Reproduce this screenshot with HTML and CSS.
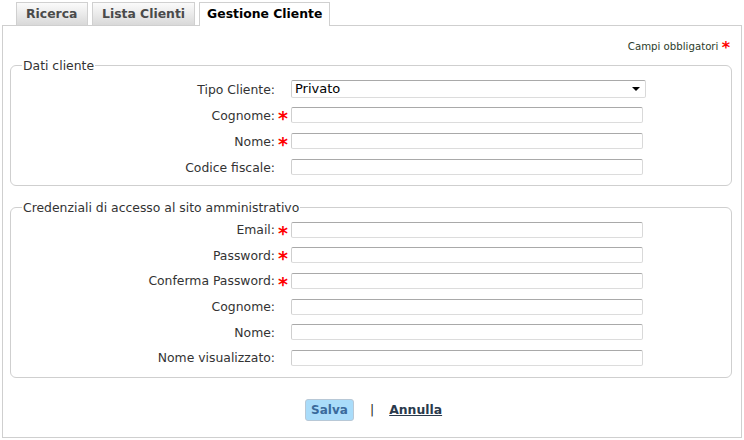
FILE: index.html
```html
<!DOCTYPE html>
<html lang="it">
<head>
<meta charset="utf-8">
<title>Gestione Cliente</title>
<link rel="stylesheet" href="styles.css">
</head>
<body>
<div class="tabs">
  <div class="tab tab-first">Ricerca</div>
  <div class="tab">Lista Clienti</div>
  <div class="tab active">Gestione Cliente</div>
</div>
<div class="panel">
  <div class="note">Campi obbligatori <span class="req">*</span></div>
  <fieldset class="group">
    <legend>Dati cliente</legend>
    <div class="row">
      <label class="lbl">Tipo Cliente:</label><span class="mark"></span>
      <div class="selectwrap">
        <select class="select"><option>Privato</option></select>
        <span class="arrow"></span>
      </div>
    </div>
    <div class="row"><label class="lbl">Cognome:</label><span class="mark req">*</span><input class="field" type="text"></div>
    <div class="row"><label class="lbl">Nome:</label><span class="mark req">*</span><input class="field" type="text"></div>
    <div class="row"><label class="lbl">Codice fiscale:</label><span class="mark"></span><input class="field" type="text"></div>
  </fieldset>
  <fieldset class="group group2">
    <legend>Credenziali di accesso al sito amministrativo</legend>
    <div class="row"><label class="lbl">Email:</label><span class="mark req">*</span><input class="field" type="text"></div>
    <div class="row"><label class="lbl">Password:</label><span class="mark req">*</span><input class="field" type="password"></div>
    <div class="row"><label class="lbl">Conferma Password:</label><span class="mark req">*</span><input class="field" type="password"></div>
    <div class="row"><label class="lbl">Cognome:</label><span class="mark"></span><input class="field" type="text"></div>
    <div class="row"><label class="lbl">Nome:</label><span class="mark"></span><input class="field" type="text"></div>
    <div class="row"><label class="lbl">Nome visualizzato:</label><span class="mark"></span><input class="field" type="text"></div>
  </fieldset>
  <div class="actions">
    <button class="btn" type="button">Salva</button>
    <span class="sep">|</span>
    <a class="cancel" href="#">Annulla</a>
  </div>
</div>
</body>
</html>
```

FILE: styles.css
```css
html, body {
  margin: 0;
  padding: 0;
  background: #fff;
}
body {
  font-family: "DejaVu Sans", Verdana, sans-serif;
  font-size: 12.4px;
  color: #333;
  width: 744px;
  height: 440px;
  overflow: hidden;
}
.tabs {
  display: flex;
  gap: 4px;
  padding: 2px 0 0 16px;
  height: 23px;
  align-items: flex-end;
}
.tab {
  box-sizing: border-box;
  height: 23px;
  padding: 0 9px;
  line-height: 22px;
  border: 1px solid #d0d0d0;
  border-bottom: none;
  background: linear-gradient(#fbfbfb, #d9d9d9);
  font-weight: bold;
  font-size: 12.4px;
  color: #4a4a4a;
}
.tab-first {
  min-width: 72px;
}
.tab.active {
  background: #fff;
  color: #000;
  height: 24px;
  padding: 0 7px;
  margin-bottom: -1px;
  position: relative;
  z-index: 1;
}
.panel {
  box-sizing: border-box;
  margin: 0 2px;
  height: 413px;
  border: 1px solid #cfcfcf;
  padding-top: 14px;
}
.note {
  height: 14px;
  text-align: right;
  font-size: 10.2px;
  line-height: 14px;
  color: #2b3d2b;
  padding-right: 11px;
}
.note .req {
  font-size: 16px;
  line-height: 0;
  vertical-align: -3px;
}
.req {
  color: #f00;
  font-weight: bold;
}
.group {
  margin: 4px 9px 0 7px;
  padding: 3px 10px 5px 10px;
  border: 1px solid #cfcfcf;
  border-radius: 6px;
}
.group legend {
  padding: 0 1px;
  margin-left: 1px;
  font-size: 12.4px;
  line-height: 15px;
  color: #333;
}
.group2 {
  margin-top: 14px;
  padding-top: 2px;
  padding-bottom: 6px;
}
.row {
  display: flex;
  align-items: center;
  height: 26px;
}
.group2 .row {
  height: 25.6px;
}
.lbl {
  width: 254px;
  text-align: right;
  color: #333;
}
.mark {
  width: 16px;
  text-align: center;
  font-size: 19px;
  line-height: 16px;
  padding-top: 3px;
  box-sizing: border-box;
  height: 16px;
}
.field {
  box-sizing: border-box;
  width: 352px;
  height: 16px;
  margin: 0;
  padding: 0 3px;
  border: 1px solid;
  border-color: #a9a9a9 #d9d9d9 #dcdcdc #cfcfcf;
  border-radius: 2px;
  background: #fff;
  font: 12px "DejaVu Sans", sans-serif;
}
.selectwrap {
  position: relative;
  width: 355px;
  height: 18px;
}
.select {
  -webkit-appearance: none;
  appearance: none;
  box-sizing: border-box;
  width: 355px;
  height: 18px;
  margin: 0;
  padding: 0 3px;
  border: 1px solid;
  border-color: #a9a9a9 #d9d9d9 #dcdcdc #cfcfcf;
  border-radius: 2px;
  background: #fff;
  color: #000;
  font: 13px "DejaVu Sans", sans-serif;
  line-height: 16px;
}
.arrow {
  position: absolute;
  right: 6px;
  top: 7px;
  width: 0;
  height: 0;
  border-left: 4px solid transparent;
  border-right: 4px solid transparent;
  border-top: 4px solid #000;
  pointer-events: none;
}
.actions {
  display: flex;
  align-items: center;
  margin: 21px 0 0 302px;
  height: 22px;
}
.btn {
  box-sizing: border-box;
  width: 49px;
  height: 22px;
  padding: 0;
  border: 1px solid #b8c8d6;
  border-radius: 3px;
  background: #a9dcfa;
  color: #3a6a9c;
  font: bold 12px "DejaVu Sans", sans-serif;
}
.sep {
  margin-left: 16px;
  color: #222;
}
.cancel {
  margin-left: 15px;
  color: #2a3a4c;
  font-weight: bold;
  text-decoration: underline;
}
```
